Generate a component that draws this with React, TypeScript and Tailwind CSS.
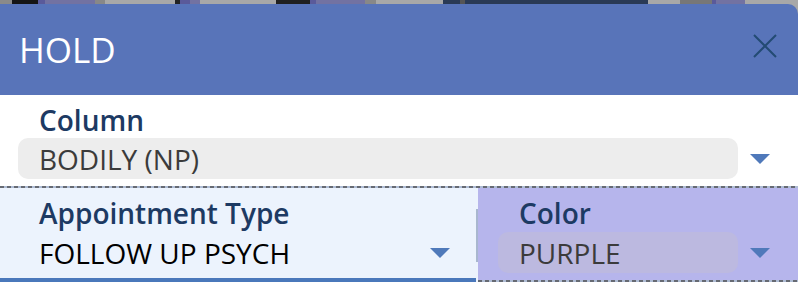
import React from "react";

const strip = [
  { w: 12, c: "#8a8a8a" },
  { w: 26, c: "#151515" },
  { w: 7, c: "#5a5a9a" },
  { w: 50, c: "#7272a2" },
  { w: 10, c: "#888888" },
  { w: 70, c: "#a8a8a8" },
  { w: 5, c: "#222222" },
  { w: 10, c: "#5a5a9a" },
  { w: 10, c: "#7272a2" },
  { w: 76, c: "#a8a8a8" },
  { w: 34, c: "#202020" },
  { w: 6, c: "#5a5a9a" },
  { w: 49, c: "#7272a2" },
  { w: 11, c: "#888888" },
  { w: 67, c: "#a8a8a8" },
  { w: 17, c: "#2a3a55" },
  { w: 5, c: "#555555" },
  { w: 183, c: "#2a3a55" },
  { w: 32, c: "#a8a8a8" },
  { w: 32, c: "#777777" },
  { w: 4, c: "#5a5a9a" },
  { w: 29, c: "#7272a2" },
  { w: 53, c: "#a8a8a8" },
];

function Arrow() {
  return (
    <svg width="20" height="10" viewBox="0 0 20 10" className="shrink-0">
      <path d="M0 0 L20 0 L10 10 Z" fill="#4f79ba" />
    </svg>
  );
}

function Dashed() {
  return (
    <div className="h-[2px] w-full bg-[repeating-linear-gradient(90deg,#666a73_0_4px,#aebcd4_4px_7px)]" />
  );
}

export default function App() {
  return (
    <div
      className="w-[798px] h-[296px] overflow-hidden bg-white"
      style={{ fontFamily: '"Open Sans", "Noto Sans", sans-serif' }}
    >
      <div className="flex h-[4px]">
        {strip.map((s, i) => (
          <div key={i} className="h-full shrink-0" style={{ width: s.w, background: s.c }} />
        ))}
      </div>
      <div className="bg-[#a8a8a8]">
        <div className="h-[91px] bg-[#5874b9] rounded-tr-[10px] flex items-center justify-between pl-[19px] pr-[20px]">
          <span className="text-white text-[35px] leading-none">HOLD</span>
          <svg width="26" height="26" viewBox="0 0 26 26" className="mb-[8px]">
            <path d="M2 2 L24 24 M24 2 L2 24" stroke="#234b73" strokeWidth="2" fill="none" />
          </svg>
        </div>
      </div>

      <div className="h-[91px] flex flex-col pt-[9px]">
        <div className="pl-[39px] text-[28px] font-semibold leading-[32px] text-[#1d3a63]">Column</div>
        <div className="flex items-center mt-[2px]">
          <div className="ml-[18px] w-[720px] h-[41px] rounded-[10px] bg-[#ededed] flex items-center pl-[21px] text-[28px] text-[#3b3b3b]">
            BODILY (NP)
          </div>
          <div className="ml-[12px]">
            <Arrow />
          </div>
        </div>
      </div>
      <Dashed />

      <div className="flex h-[94px]">
        <div className="w-[476px] bg-[#ecf3fd] flex flex-col border-b-4 border-[#4a78bb] pt-[9px]">
          <div className="pl-[39px] text-[28px] font-semibold leading-[32px] text-[#1d3a63]">Appointment Type</div>
          <div className="flex items-center justify-between mt-[3px] h-[41px]">
            <span className="pl-[39px] text-[28px] text-black">FOLLOW UP PSYCH</span>
            <div className="mr-[26px]">
              <Arrow />
            </div>
          </div>
        </div>
        <div className="w-[2px] bg-[#ecf3fd] flex items-center">
          <div className="w-[2px] h-[53px] bg-[#a9b7cf]" />
        </div>
        <div className="flex-1 bg-[#b6b5ec] flex flex-col">
          <div className="flex-1 flex flex-col pt-[9px]">
            <div className="pl-[41px] text-[28px] font-semibold leading-[32px] text-[#1d3a63]">Color</div>
            <div className="flex items-center mt-[3px]">
              <div className="ml-[20px] w-[240px] h-[41px] rounded-[10px] bg-[#bcb9e0] flex items-center pl-[21px] text-[28px] text-[#3b3b3b]">
                PURPLE
              </div>
              <div className="ml-[12px]">
                <Arrow />
              </div>
            </div>
          </div>
          <Dashed />
        </div>
      </div>
    </div>
  );
}
